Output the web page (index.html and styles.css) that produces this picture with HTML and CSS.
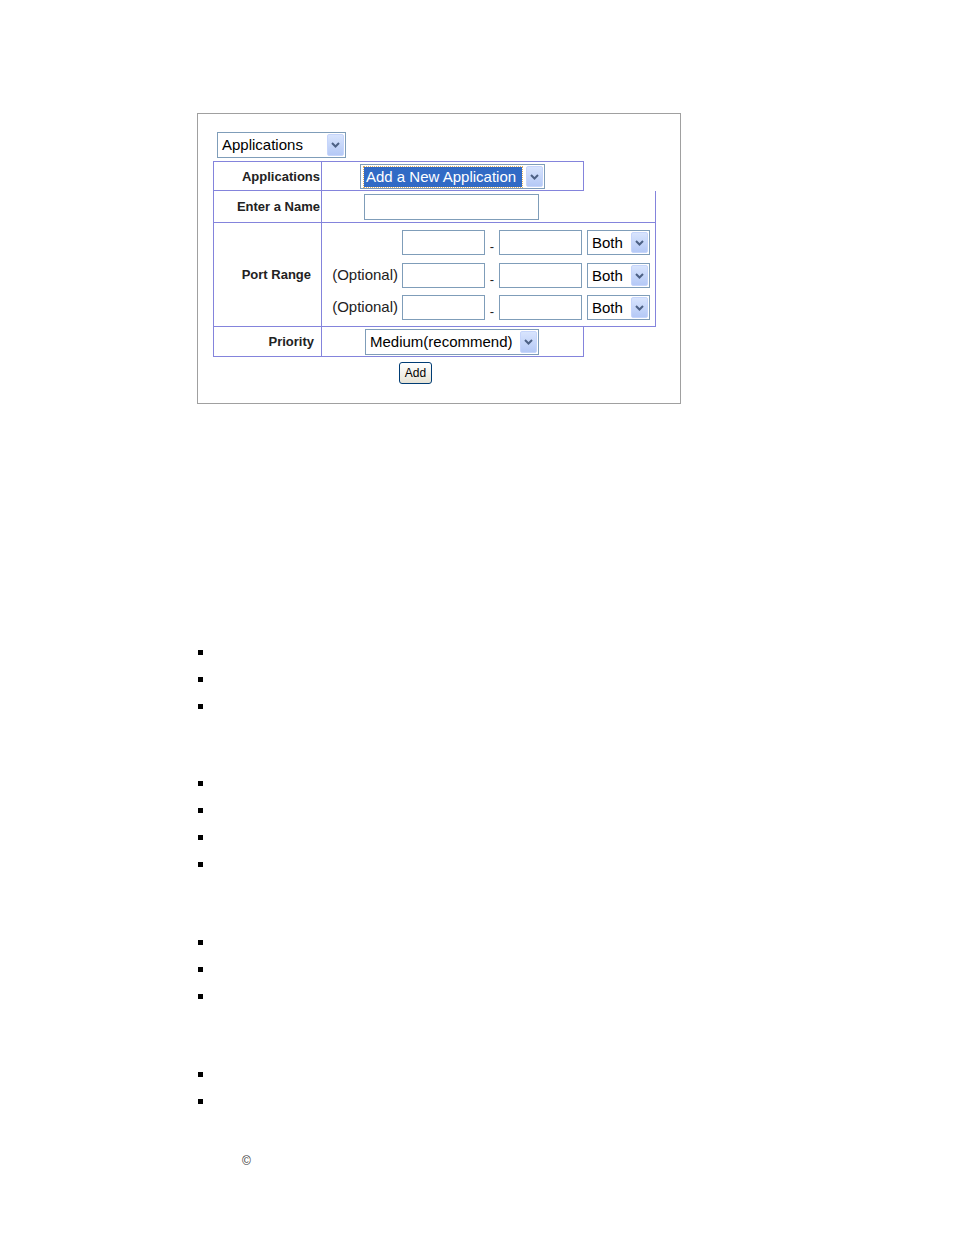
FILE: index.html
```html
<!DOCTYPE html>
<html>
<head>
<meta charset="utf-8">
<link rel="stylesheet" href="styles.css">
</head>
<body>
<div class="panel">
  <div class="sel sel-top"><span class="txt">Applications</span><span class="arrow"><svg width="9" height="6" viewBox="0 0 9 6"><path d="M1 1 L4.5 4.5 L8 1" fill="none" stroke="#4d6185" stroke-width="2"/></svg></span></div>
  <div class="grid">
    <div class="row r1">
      <div class="lab lab-a">Applications</div>
      <div class="val">
        <div class="sel sel-app"><span class="hl">Add a New Application</span><span class="arrow"><svg width="9" height="6" viewBox="0 0 9 6"><path d="M1 1 L4.5 4.5 L8 1" fill="none" stroke="#4d6185" stroke-width="2"/></svg></span></div>
      </div>
    </div>
    <div class="mid">
      <div class="row r2">
        <div class="lab lab-a">Enter a Name</div>
        <div class="val"><div class="inp inp-name"></div></div>
      </div>
      <div class="row r3">
        <div class="lab lab-p">Port Range</div>
        <div class="val ports">
          <div class="pr">
            <span class="opt"></span><div class="inp inp-port"></div><span class="dash">-</span><div class="inp inp-port"></div>
            <div class="sel sel-both"><span class="txt">Both</span><span class="arrow"><svg width="9" height="6" viewBox="0 0 9 6"><path d="M1 1 L4.5 4.5 L8 1" fill="none" stroke="#4d6185" stroke-width="2"/></svg></span></div>
          </div>
          <div class="pr">
            <span class="opt">(Optional)</span><div class="inp inp-port"></div><span class="dash">-</span><div class="inp inp-port"></div>
            <div class="sel sel-both"><span class="txt">Both</span><span class="arrow"><svg width="9" height="6" viewBox="0 0 9 6"><path d="M1 1 L4.5 4.5 L8 1" fill="none" stroke="#4d6185" stroke-width="2"/></svg></span></div>
          </div>
          <div class="pr pr3">
            <span class="opt">(Optional)</span><div class="inp inp-port"></div><span class="dash">-</span><div class="inp inp-port"></div>
            <div class="sel sel-both"><span class="txt">Both</span><span class="arrow"><svg width="9" height="6" viewBox="0 0 9 6"><path d="M1 1 L4.5 4.5 L8 1" fill="none" stroke="#4d6185" stroke-width="2"/></svg></span></div>
          </div>
        </div>
      </div>
    </div>
    <div class="row r4">
      <div class="lab lab-pr">Priority</div>
      <div class="val">
        <div class="sel sel-pri"><span class="txt">Medium(recommend)</span><span class="arrow"><svg width="9" height="6" viewBox="0 0 9 6"><path d="M1 1 L4.5 4.5 L8 1" fill="none" stroke="#4d6185" stroke-width="2"/></svg></span></div>
      </div>
    </div>
    <div class="btn">Add</div>
  </div>
</div>

<div class="lists">
  <ul class="bl"><li></li><li></li><li></li></ul>
  <ul class="bl bl2"><li></li><li></li><li></li><li></li></ul>
  <ul class="bl"><li></li><li></li><li></li></ul>
  <ul class="bl"><li></li><li></li></ul>
  <div class="copy">©</div>
</div>
</body>
</html>
```
FILE: styles.css
```css
* { box-sizing: border-box; }
body {
  margin: 0;
  font-family: "Liberation Sans", Arial, sans-serif;
  color: #000;
  background: #fff;
}
.panel {
  margin: 113px 0 0 197px;
  width: 484px;
  height: 291px;
  border: 1px solid #a0a0a0;
  padding: 18px 0 0 15px;
}
.sel {
  display: flex;
  align-items: center;
  justify-content: space-between;
  border: 1px solid #7f9db9;
  background: #fff;
  font-size: 15px;
  line-height: 18px;
}
.sel .txt { padding-left: 4px; white-space: nowrap; }
.arrow {
  width: 17px;
  align-self: stretch;
  margin: 1px 1px 1px 0;
  background: linear-gradient(#d8e4fd, #b5c9f6);
  border: 1px solid #c6d5fb;
  border-radius: 2px;
  display: flex;
  align-items: center;
  justify-content: center;
}
.sel-top { width: 129px; height: 26px; margin-left: 4px; }
.grid { margin-top: 3px; }
.row { display: flex; }
.lab {
  width: 108px;
  flex: none;
  border-right: 1px solid #8484dc;
  display: flex;
  align-items: center;
  justify-content: flex-end;
  font-weight: bold;
  font-size: 13px;
  color: #222;
  white-space: nowrap;
}
.lab-a { padding-right: 1px; }
.lab-p { padding-right: 10px; }
.lab-pr { padding-right: 7px; }
.val { flex: 1; }
.r1 {
  width: 371px;
  height: 30px;
  border: 1px solid #8484dc;
}
.mid {
  width: 443px;
  border: 1px solid #8484dc;
  border-top: none;
}
.r2 { height: 32px; border-bottom: 1px solid #8484dc; }
.r3 { height: 103px; }
.r4 {
  width: 371px;
  height: 30px;
  border: 1px solid #8484dc;
  border-top: none;
}
.sel-app {
  width: 185px;
  height: 25px;
  margin: 2px 0 0 38px;
  justify-content: flex-start;
}
.sel-app .arrow { margin-left: auto; }
.hl {
  margin-left: 3px;
  width: 158px;
  height: 20px;
  background: #316ac5;
  color: #fff;
  padding-left: 2px;
  line-height: 19px;
  outline: 1px dotted #e0b060;
  white-space: nowrap;
}
.inp {
  border: 1px solid #7f9db9;
  background: #fff;
  flex: none;
}
.inp-name { width: 175px; height: 26px; margin: 3px 0 0 42px; }
.ports { padding-top: 7px; }
.pr { display: flex; align-items: center; height: 25px; margin-bottom: 8px; }
.pr3 { margin-top: -1px; }
.opt {
  width: 80px;
  flex: none;
  text-align: right;
  padding-right: 4px;
  font-size: 15px;
  line-height: 16px;
  padding-bottom: 2px;
  color: #222;
  white-space: nowrap;
}
.inp-port { width: 83px; height: 25px; }
.dash {
  width: 14px;
  flex: none;
  text-align: center;
  font-size: 13px;
  padding-top: 7px;
  color: #222;
}
.sel-both { width: 63px; height: 25px; margin-left: 5px; }
.sel-pri { width: 174px; height: 26px; margin: 2px 0 0 43px; }
.btn {
  margin: 5px 0 0 186px;
  width: 33px;
  height: 22px;
  border: 1px solid #003c74;
  border-radius: 3px;
  background: linear-gradient(#ffffff, #e6e3d6);
  font-size: 12px;
  line-height: 20px;
  text-align: center;
  color: #000;
}
.lists { margin-top: 235px; padding-left: 198px; }
.bl { list-style: none; margin: 0; padding: 0; }
.bl + .bl { margin-top: 51px; }
.bl + .bl2 { margin-top: 50px; }
.bl li { height: 27px; display: flex; align-items: center; }
.bl li::before {
  content: "";
  width: 5px;
  height: 5px;
  background: #000;
}
.copy {
  margin: 39px 0 0 44px;
  font-size: 12px;
  line-height: 14px;
  color: #333;
}
```
